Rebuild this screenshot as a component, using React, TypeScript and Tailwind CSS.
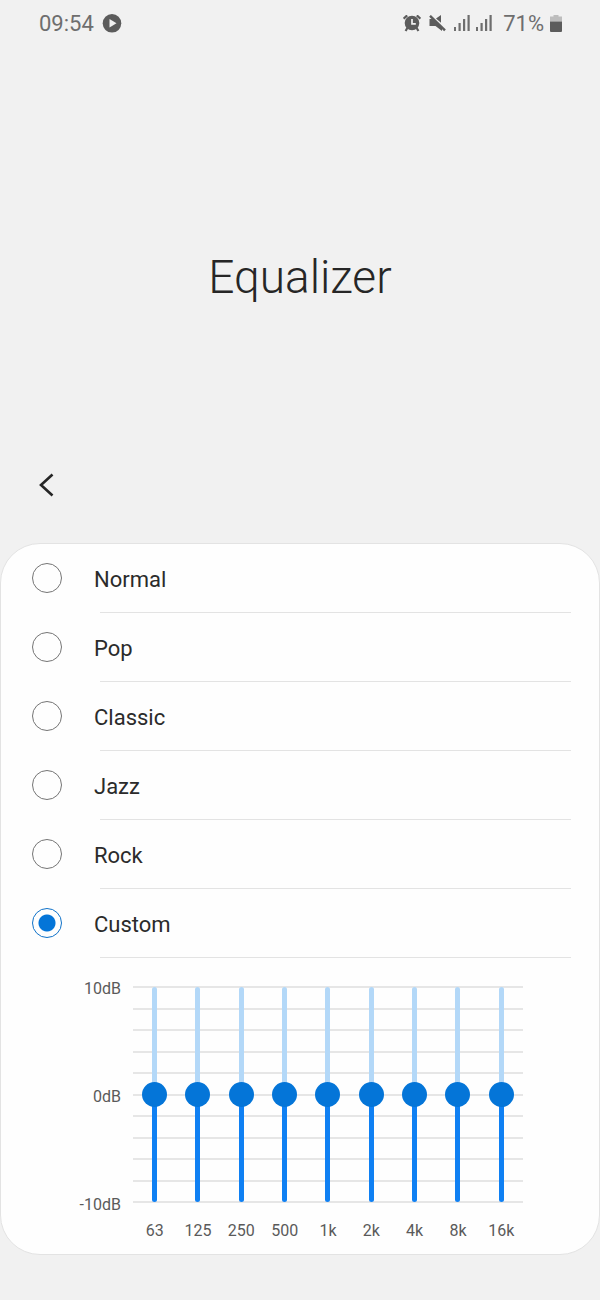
import React from 'react';
import { clsx } from 'clsx';

const PRESETS = ['Normal', 'Pop', 'Classic', 'Jazz', 'Rock', 'Custom'];
const BANDS = ['63', '125', '250', '500', '1k', '2k', '4k', '8k', '16k'];
const MAX_DB = 10;
const GRID_LINES = 11;

const SignalIcon: React.FC = () => (
  <svg viewBox="0 0 17 18" className="h-[18px] w-[17px] fill-[#6e6e6e]" aria-hidden="true">
    <rect x="0" y="12" width="2" height="4" />
    <rect x="4.5" y="8" width="2.2" height="8" />
    <rect x="9" y="4" width="2.2" height="12" />
    <rect x="13.5" y="0" width="2.2" height="16" />
  </svg>
);

const StatusBar: React.FC = () => (
  <div className="flex h-12 items-center justify-between pr-[38px] pl-[39px] text-[22px] leading-6 text-[#6e6e6e]">
    <div className="flex items-center gap-2">
      <span>09:54</span>
      <svg viewBox="0 0 20 20" className="h-5 w-5" aria-hidden="true">
        <circle cx="10" cy="9.3" r="9.3" fill="#5c5c5c" />
        <path d="M7.5 5.1v8.4l7-4.2z" fill="#f1f1f1" />
      </svg>
    </div>

    <div className="flex items-center">
      {/* Alarm */}
      <svg viewBox="0 0 18 18" className="mr-2 h-[18px] w-[18px]" aria-hidden="true">
        <circle cx="9" cy="8" r="7.3" fill="#5c5c5c" />
        <path d="M.6 3.6 4.2.4M17.4 3.6 13.8.4M4.6 12.5 2.6 16M13.4 12.5l2 3.5" stroke="#5c5c5c" strokeWidth="2.2" />
        <path d="M9 4v4.8h3.8" fill="none" stroke="#f1f1f1" strokeWidth="1.7" />
      </svg>
      {/* Sound off */}
      <svg viewBox="0 0 17 18" className="mr-2 h-[18px] w-[17px]" aria-hidden="true">
        <path d="M.5 4h4.5L13 11.5V16L6.5 11H.5zM7 3.6 12 0v7.8z" fill="#5c5c5c" />
        <path d="M1 .8l15 14.6" stroke="#5c5c5c" strokeWidth="2.4" />
      </svg>
      <div className="mr-2.5 flex gap-[5px]">
        <SignalIcon />
        <SignalIcon />
      </div>
      <span className="mr-1.5">71%</span>
      <svg viewBox="0 0 12 18" className="h-[18px] w-3" aria-hidden="true">
        <path d="M3.5 0h5v1.5H12V6.5H0V1.5h3.5z" fill="#bdbdbd" />
        <path d="M0 6.5h12V16q0 1-1 1H1q-1 0-1-1z" fill="#5c5c5c" />
      </svg>
    </div>
  </div>
);

interface PresetRowProps {
  name: string;
  checked: boolean;
  onSelect: () => void;
}

const PresetRow: React.FC<PresetRowProps> = ({ name, checked, onSelect }) => (
  <label className="flex h-[69px] cursor-pointer items-center pr-7 pb-0.5 pl-[31px]">
    <input
      type="radio"
      name="preset"
      checked={checked}
      onChange={onSelect}
      className={clsx(
        'h-[30px] w-[30px] shrink-0 appearance-none rounded-full border',
        checked
          ? 'border-[#0f72c9] bg-[radial-gradient(circle,#0475d8_8px,#fefefe_9px)]'
          : 'border-[#757575]',
      )}
    />
    <span className="ml-8 flex-1 pt-1 text-[22px] leading-7 text-[#2b2b2b]">{name}</span>
  </label>
);

interface BandSliderProps {
  band: string;
  value: number;
  onChange: (value: number) => void;
}

const BandSlider: React.FC<BandSliderProps> = ({ band, value, onChange }) => {
  const filled = ((value + MAX_DB) / (MAX_DB * 2)) * 100;

  return (
    <input
      id={`band-${band}`}
      type="range"
      min={-MAX_DB}
      max={MAX_DB}
      value={value}
      onChange={(e) => onChange(Number(e.target.value))}
      style={{ backgroundImage: `linear-gradient(to top, #0f80f3 ${filled}%, #b3d8f8 ${filled}%)` }}
      className="h-[215px] w-[5px] cursor-pointer appearance-none rounded-sm [direction:rtl] [writing-mode:vertical-lr] [&::-webkit-slider-thumb]:h-[25px] [&::-webkit-slider-thumb]:w-[25px] [&::-webkit-slider-thumb]:appearance-none [&::-webkit-slider-thumb]:rounded-full [&::-webkit-slider-thumb]:bg-[#0475d8]"
    />
  );
};

const Equalizer: React.FC = () => {
  const [gains, setGains] = React.useState<number[]>(BANDS.map(() => 0));

  const onChangeGain = (index: number, value: number) =>
    setGains((prev) => prev.map((gain, i) => (i === index ? value : gain)));

  return (
    <div className="flex gap-3 pt-7 pr-[76px] pb-[11px] pl-[72px] text-base leading-6 text-[#5a5a5a]">
      <div className="-mt-[9px] flex h-60 w-12 flex-col justify-between text-right">
        <span>10dB</span>
        <span>0dB</span>
        <span>-10dB</span>
      </div>

      <div className="flex-1">
        <div className="relative">
          {/* Grid behind the sliders */}
          <div className="absolute inset-0 flex flex-col justify-between">
            {Array.from({ length: GRID_LINES }, (_, i) => (
              <div key={i} className="h-0.5 bg-[#e6e6e6]" />
            ))}
          </div>
          <div className="relative grid grid-cols-9 justify-items-center py-px">
            {BANDS.map((band, i) => (
              <BandSlider key={band} band={band} value={gains[i]} onChange={(value) => onChangeGain(i, value)} />
            ))}
          </div>
        </div>

        <div className="mt-4 grid grid-cols-9 text-center">
          {BANDS.map((band) => (
            <label key={band} htmlFor={`band-${band}`}>
              {band}
            </label>
          ))}
        </div>
      </div>
    </div>
  );
};

export default function App() {
  const [preset, setPreset] = React.useState('Custom');

  return (
    <div className="min-h-screen bg-[#f1f1f1] pb-[45px] font-['Roboto',sans-serif]">
      <StatusBar />

      <header>
        <h1 className="pt-[199px] text-center text-[46px] leading-[60px] font-light text-[#262626]">Equalizer</h1>
        <div className="px-6 pt-[158px] pb-[38px]">
          <button type="button" aria-label="Back" className="flex h-10 w-10 items-center justify-center">
            <svg viewBox="0 0 24 24" className="h-6 w-6" fill="none" stroke="#262626" strokeWidth="2.6">
              <path d="M20.5 1.5 9 12l11.5 10.5" />
            </svg>
          </button>
        </div>
      </header>

      <main className="rounded-[40px] border border-[#e3e3e3] bg-[#fefefe]">
        <fieldset aria-label="Preset">
          {PRESETS.map((name) => (
            <div key={name}>
              <PresetRow name={name} checked={preset === name} onSelect={() => setPreset(name)} />
              <div className="-mt-px mr-7 ml-[99px] h-px bg-[#e3e3e3]" />
            </div>
          ))}
        </fieldset>
        <Equalizer />
      </main>
    </div>
  );
}
